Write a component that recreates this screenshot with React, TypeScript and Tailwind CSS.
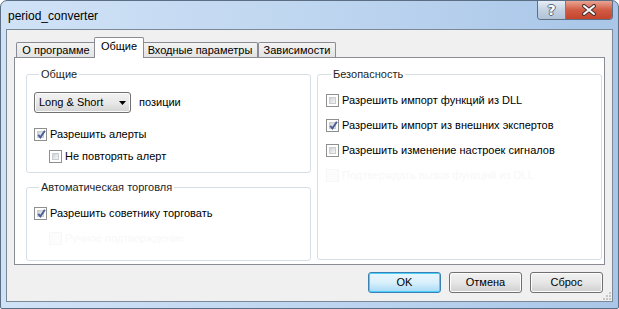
import React from "react";

const font = { fontFamily: '"Liberation Sans", Arial, sans-serif' };

const CheckBox = ({ checked, faint }: { checked?: boolean; faint?: boolean }) => (
  <span
    className={
      faint
        ? "w-[13px] h-[13px] shrink-0 border border-[#f7f7f7] bg-[#fcfcfc]"
        : "w-[13px] h-[13px] shrink-0 border border-[#8e8f8f] bg-white p-[2px] flex"
    }
  >
    {!faint && (
      <span className="relative flex-1 bg-linear-to-br from-[#cfd2d6] to-[#f7f7f7] border border-[#c9ccd0]">
        {checked && (
          <svg
            width="11"
            height="11"
            viewBox="0 0 11 11"
            className="absolute left-[-2px] top-[-3px]"
          >
            <path
              d="M2.2 5.8 L4.4 8.4 L8.9 1.8"
              fill="none"
              stroke="#4a5f97"
              strokeWidth="1.9"
            />
          </svg>
        )}
      </span>
    )}
  </span>
);

const Check = ({
  label,
  checked,
  faint,
  className = "",
}: {
  label: string;
  checked?: boolean;
  faint?: boolean;
  className?: string;
}) => (
  <div className={"flex items-center gap-[3px] h-[13px] " + className}>
    <CheckBox checked={checked} faint={faint} />
    <span className={faint ? "text-[#f8f8f8]" : "text-black"}>{label}</span>
  </div>
);

const Group = ({
  title,
  className,
  children,
}: {
  title: string;
  className: string;
  children: React.ReactNode;
}) => (
  <fieldset className={"border border-[#d5dfe5] rounded-[3px] " + className}>
    <legend className="ml-[5px] px-[2px] h-[14px] leading-[14px] text-[#1e1e1e]">
      {title}
    </legend>
    {children}
  </fieldset>
);

const Button = ({ label, primary }: { label: string; primary?: boolean }) => (
  <button
    className={
      "w-[73px] h-[21px] rounded-[3px] border flex items-center justify-center " +
      (primary
        ? "border-[#3c7fb1] shadow-[inset_0_0_0_1px_#48d0fb] bg-linear-to-b from-[#eaf6fd] via-[#d9f0fc] to-[#a7d9f5]"
        : "border-[#707070] shadow-[inset_0_0_0_1px_#fcfcfc] bg-linear-to-b from-[#f2f2f2] via-[#e6e6e6] to-[#cfcfcf]")
    }
  >
    {label}
  </button>
);

const Tab = ({ label, w, active }: { label: string; w: string; active?: boolean }) => (
  <div
    className={
      active
        ? "relative z-10 h-[21px] -mb-[1px] -mx-[2px] bg-white border border-b-0 border-[#898c95] rounded-t-[2px] flex items-center justify-center pb-[3px] " +
          w
        : "h-[15px] bg-linear-to-b from-[#f3f3f3] to-[#e3e3e3] border border-b-0 border-[#898c95] rounded-t-[2px] flex items-center justify-center " +
          w
    }
  >
    {label}
  </div>
);

export default function App() {
  return (
    <div
      className="relative w-[619px] h-[309px] rounded-t-[7px] rounded-b-[2px] border border-[#5c6e84] bg-linear-to-r from-[#d0e2f6] via-[#bfd6f0] to-[#a9c6e8] flex flex-col text-[11px] text-black"
      style={font}
    >
      {/* title bar */}
      <div className="h-[28px] flex items-start justify-between pl-[7px] pr-[5px]">
        <div className="mt-[7px] text-[12px] leading-[16px] text-black">
          period_converter
        </div>
        <div className="flex h-[19px] rounded-b-[4px] border border-t-0 border-[#5e6f86] overflow-hidden">
          <div className="w-[28px] h-full bg-linear-to-b from-[#e6eef7] via-[#c4d2e2] to-[#b1c3d8] border-r border-[#6d7f96] flex items-center justify-center">
            <span
              className="text-[14px] font-bold leading-none text-white"
              style={{
                fontFamily: '"DejaVu Sans", sans-serif',
                textShadow:
                  "1px 0 #566a84, -1px 0 #566a84, 0 1px #566a84, 0 -1px #566a84",
              }}
            >
              ?
            </span>
          </div>
          <div className="w-[46px] h-full bg-linear-to-b from-[#e8a493] via-[#d15b44] to-[#c4442c] flex items-center justify-center">
            <svg width="16" height="12" viewBox="0 0 16 12">
              <path d="M3 2 L13 10 M13 2 L3 10" stroke="#4a3030" strokeWidth="4" strokeLinecap="round" />
              <path d="M3 2 L13 10 M13 2 L3 10" stroke="#ffffff" strokeWidth="2" strokeLinecap="round" />
            </svg>
          </div>
        </div>
      </div>

      {/* client area */}
      <div className="relative mx-[5px] h-[273px] border border-[#7b8898] bg-[#f0f0f0] flex flex-col">
        {/* tabs */}
        <div className="mt-[7px] h-[20px] ml-[9px] flex items-end">
          <Tab label="О программе" w="w-[80px]" />
          <Tab label="Общие" w="w-[50px]" active />
          <Tab label="Входные параметры" w="w-[116px]" />
          <Tab label="Зависимости" w="w-[78px]" />
        </div>

        {/* panel */}
        <div className="ml-[7px] w-[591px] h-[208px] bg-white border border-[#898c95] flex gap-[6px] pt-[9px] pl-[11px]">
          <div className="w-[285px] flex flex-col gap-[7px]">
            <Group title="Общие" className="h-[106px] pl-[7px]">
              <div className="mt-[11px] flex items-center gap-[8px]">
                <div className="w-[97px] h-[21px] rounded-[3px] border border-[#707070] shadow-[inset_0_0_0_1px_#fbfbfb] bg-linear-to-b from-[#f2f2f2] via-[#e9e9e9] to-[#d3d3d3] flex items-center justify-between pl-[4px] pr-[4px]">
                  <span>Long &amp; Short</span>
                  <svg width="7" height="4" viewBox="0 0 7 4">
                    <path d="M0 0 H7 L3.5 4 Z" fill="#000" />
                  </svg>
                </div>
                <span>позиции</span>
              </div>
              <Check label="Разрешить алерты" checked className="mt-[15px]" />
              <Check label="Не повторять алерт" className="mt-[9px] ml-[15px]" />
            </Group>
            <Group title="Автоматическая торговля" className="h-[81px] pl-[7px]">
              <Check label="Разрешить советнику торговать" checked className="mt-[13px]" />
              <Check label="Ручное подтверждение" faint className="mt-[12px] ml-[15px]" />
            </Group>
          </div>
          <Group title="Безопасность" className="w-[285px] h-[193px] pl-[8px]">
            <Check label="Разрешить импорт функций из DLL" className="mt-[13px]" />
            <Check label="Разрешить импорт из внешних экспертов" checked className="mt-[12px]" />
            <Check label="Разрешить изменение настроек сигналов" className="mt-[12px]" />
            <Check label="Подтверждать вызов функций из DLL" faint className="mt-[12px]" />
          </Group>
        </div>

        {/* buttons */}
        <div className="mt-[7px] mr-[9px] flex justify-end gap-[8px]">
          <Button label="OK" primary />
          <Button label="Отмена" />
          <Button label="Сброс" />
        </div>

        {/* size grip */}
        <svg width="8" height="8" viewBox="0 0 8 8" className="absolute right-[1px] bottom-[1px]">
          {[
            [6, 0],
            [6, 3],
            [3, 3],
            [6, 6],
            [3, 6],
            [0, 6],
          ].map(([x, y]) => (
            <rect key={x + "-" + y} x={x} y={y} width="2" height="2" fill="#c6c6c6" />
          ))}
        </svg>
      </div>
    </div>
  );
}
